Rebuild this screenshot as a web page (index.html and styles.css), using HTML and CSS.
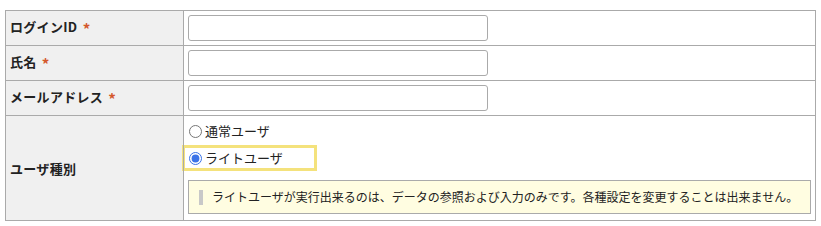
FILE: index.html
```html
<!DOCTYPE html>
<html lang="ja">
<head>
    <meta charset="UTF-8">
    <title>ユーザ登録</title>
    <link rel="stylesheet" href="styles.css">
</head>
<body>
    <table class="form-table">
        <tr>
            <th>ログインID <span class="required">*</span></th>
            <td><input type="text" class="text-input"></td>
        </tr>
        <tr>
            <th>氏名 <span class="required">*</span></th>
            <td><input type="text" class="text-input"></td>
        </tr>
        <tr>
            <th>メールアドレス <span class="required">*</span></th>
            <td><input type="text" class="text-input"></td>
        </tr>
        <tr>
            <th>ユーザ種別</th>
            <td class="type-cell">
                <label class="radio-item"><input type="radio" name="type">通常ユーザ</label>
                <label class="radio-item selected"><input type="radio" name="type" checked>ライトユーザ</label>
                <div class="note">ライトユーザが実行出来るのは、データの参照および入力のみです。各種設定を変更することは出来ません。</div>
            </td>
        </tr>
    </table>
</body>
</html>
```
FILE: styles.css
```css
body {
    margin: 0;
    font-family: "Noto Sans CJK JP", "DejaVu Sans", sans-serif;
    font-size: 13px;
    color: #222;
    background: #fff;
}

.form-table {
    margin: 10px 5px 0;
    width: 811px;
    border-collapse: collapse;
}

.form-table th,
.form-table td {
    border: 1px solid #aaa;
    height: 34px;
    padding: 0 4px;
    vertical-align: middle;
}

.form-table th {
    width: 169px;
    background-color: #f0f0f0;
    text-align: left;
    font-weight: bold;
    letter-spacing: 0.3px;
    color: #222;
}

.required {
    margin-left: 2px;
    color: #d4582c;
    font-weight: bold;
    font-size: 15px;
    vertical-align: -3px;
}

.text-input {
    display: block;
    box-sizing: border-box;
    width: 300px;
    height: 26px;
    margin: 0;
    border: 1px solid #aaa;
    border-radius: 3px;
    background: #fff;
}

.type-cell {
    padding: 5px 4px 6px 4px !important;
}

.radio-item {
    display: flex;
    align-items: center;
    height: 20px;
    line-height: 20px;
}

.radio-item input {
    width: 13px;
    height: 13px;
    margin: 0 3px 0 1px;
    accent-color: #3b73e8;
}

.radio-item.selected {
    width: 126px;
    height: 20px;
    margin: 4px 0 0 -6px;
    padding: 0 0 0 3px;
    border: 3px solid #f4e27c;
}

.note {
    margin-top: 9px;
    padding: 8px 10px;
    border: 1px solid #aaa;
    background-color: #fffde1;
    font-size: 12px;
    line-height: 16px;
    color: #222;
}

.note::before {
    content: "";
    display: inline-block;
    width: 4px;
    height: 15px;
    margin-right: 9px;
    vertical-align: -3px;
    background-color: #c8c8c8;
}
```
